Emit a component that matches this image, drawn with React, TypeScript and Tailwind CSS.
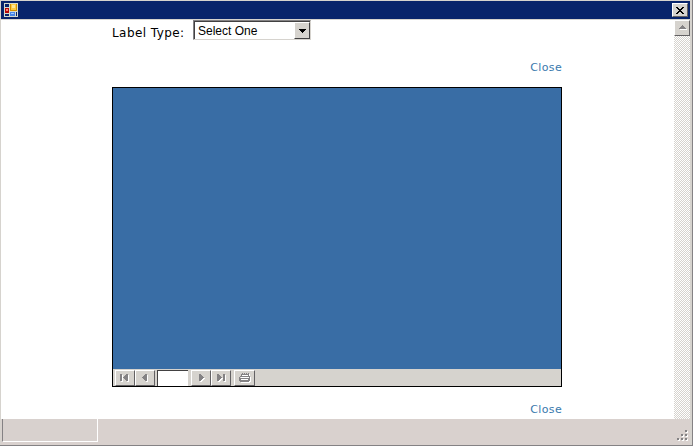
import type { ReactNode } from "react";

const verdana = "font-['DejaVu_Sans',sans-serif]";
const raised =
  "shrink-0 flex items-center justify-center bg-[#d6d3ce] border border-t-white border-l-white border-r-[#636163] border-b-[#636163]";

function AppIcon() {
  return (
    <svg width="14" height="14" viewBox="0 0 14 14" shapeRendering="crispEdges">
      <path d="M0 0h14v14H0z" fill="#d6dbce" />
      <path d="M1 1h4v3H1zM1 11h4v2H1zM12 9h1v4h-1z" fill="#08246b" />
      <path d="M6 1h7v7H6z" fill="#d69200" />
      <path d="M7 1h5v6H7z" fill="#ffcb42" />
      <path d="M8 2h3v3H8z" fill="#ffe794" />
      <path d="M1 5h4v5H1z" fill="#b50808" />
      <path d="M2 6h2v2H2z" fill="#ff8673" />
      <path d="M6 9h5v4H6z" fill="#4a86e7" />
      <path d="M7 10h3v1H7z" fill="#a5cfff" />
    </svg>
  );
}

function ToolButton({ path, width }: { path: string; width: string }) {
  return (
    <button className={`${raised} ${width} h-4`}>
      <svg width="14" height="12" viewBox="0 0 14 12" shapeRendering="crispEdges">
        <path d={path} fill="#fff" transform="translate(1 1)" />
        <path d={path} fill="#848284" />
      </svg>
    </button>
  );
}

function CloseLink({ children }: { children: ReactNode }) {
  return (
    <a className={`${verdana} block text-right text-[11px] leading-4 tracking-[0.35px] text-[#3979ad]`}>
      {children}
    </a>
  );
}

const checker =
  "bg-[conic-gradient(#d6d3ce_25%,#fff_0_50%,#d6d3ce_0_75%,#fff_0)] bg-[length:2px_2px]";

export default function App() {
  return (
    <div className="flex h-[446px] w-[693px] flex-col overflow-hidden border-b border-r border-[#848284] bg-[#d9d1ce]">
      <div className="flex min-h-0 flex-1 flex-col border-l border-r-2 border-t border-[#d6d3ce]">
        <header className="flex h-[18px] shrink-0 items-center justify-between bg-[#08246b] pl-[3px] pr-[2px]">
          <AppIcon />
          <button className={`${raised} h-[14px] w-4`}>
            <svg width="10" height="9" viewBox="0 0 10 9" shapeRendering="crispEdges">
              <path
                d="M1 1h2v1h1v1h2V2h1V1h2v1H8v1H7v1H6v1h1v1h1v1h1v1H7V7H6V6H4v1H3v1H1V7h1V6h1V5h1V4H3V3H2V2H1z"
                fill="#000"
              />
            </svg>
          </button>
        </header>
        <div className="flex h-[400px] shrink-0 border-t border-[#d6d3ce] bg-white">
          <main className="flex-1 pl-[111px]">
            <div className="flex h-10 w-[450px] items-start">
              <label className={`${verdana} mt-[5px] w-[81px] shrink-0 whitespace-nowrap text-[12px] leading-4 tracking-[0.43px] text-black`}>
                Label Type:
              </label>
              <div className="flex h-5 w-[118px] border border-b-[#d6d3ce] border-l-[#848284] border-r-[#d6d3ce] border-t-[#848284] bg-white">
                <div className="flex flex-1 border-l border-t border-[#424142]">
                  <span className="flex-1 whitespace-nowrap pl-[3px] font-['Liberation_Sans',Arial,sans-serif] text-[12px] leading-[18px] text-black">
                    Select One
                  </span>
                  <span className="flex h-[17px] w-4 items-center justify-center border border-b-[#424142] border-l-white border-r-[#424142] border-t-white bg-[#d6d3ce]">
                    <svg width="7" height="4" viewBox="0 0 7 4" shapeRendering="crispEdges">
                      <path d="M0 0h7v1H6v1H5v1H4v1H3V3H2V2H1V1H0z" fill="#000" />
                    </svg>
                  </span>
                </div>
              </div>
            </div>
            <div className="w-[450px]">
              <CloseLink>Close</CloseLink>
              <div className="mb-[15px] mt-[11px] flex h-[300px] flex-col border border-black bg-[#396da5]">
                <div className="flex-1" />
                <div className="flex h-[17px] items-center bg-[#d6d3ce] pl-[2px]">
                  <ToolButton width="w-5" path="M2 2h2v7H2zM8 2h2v7H8V8H7V7H6V6H5V5h1V4h1V3h1z" />
                  <ToolButton width="w-5" path="M4 5h1V4h1V3h1V2h2v7H7V8H6V7H5V6H4z" />
                  <div className="ml-[2px] h-4 w-[31px] shrink-0 border-l border-t border-[#424142] bg-white" />
                  <div className="w-[3px] shrink-0" />
                  <ToolButton width="w-5" path="M5 2h2v1h1v1h1v1h1v1H9v1H8v1H7v1H5z" />
                  <ToolButton width="w-5" path="M3 2h2v1h1v1h1v1h1v1H7v1H6v1H5v1H3zM9 2h2v7H9z" />
                  <div className="w-[3px] shrink-0" />
                  <ToolButton
                    width="w-[21px]"
                    path="M4 1h1v1h1V1h1v1h1V1h1v1h1V1h1v3h1v5h-1v1H2V9H1V5h1V4h1V2h1zM4 3v1h6V3zM2 5v1h9V5zM3 7v1h7V7z"
                  />
                </div>
              </div>
              <CloseLink>Close</CloseLink>
            </div>
          </main>
          <aside className={`w-4 shrink-0 ${checker}`}>
            <div className={`${raised} h-4 w-4`}>
              <svg width="9" height="6" viewBox="0 0 9 6" shapeRendering="crispEdges">
                <path d="M2 4h7v1H2z" fill="#fff" />
                <path d="M4 0h1v1h1v1h1v1h1v1H1V3h1V2h1V1h1z" fill="#848284" />
              </svg>
            </div>
          </aside>
        </div>
        <footer className="flex min-h-0 flex-1 items-start justify-between pl-px">
          <div className="h-[23px] w-24 border-b border-l border-r border-b-white border-l-[#848284] border-r-white bg-[#d8d1ce]" />
          <svg className="mr-px mt-[11px]" width="12" height="12" viewBox="0 0 12 12" shapeRendering="crispEdges">
            <path d="M9 1h2v2H9zM5 5h2v2H5zM9 5h2v2H9zM1 9h2v2H1zM5 9h2v2H5zM9 9h2v2H9z" fill="#fff" />
            <path d="M8 0h2v2H8zM4 4h2v2H4zM8 4h2v2H8zM0 8h2v2H0zM4 8h2v2H4zM8 8h2v2H8z" fill="#848284" />
          </svg>
        </footer>
      </div>
    </div>
  );
}
